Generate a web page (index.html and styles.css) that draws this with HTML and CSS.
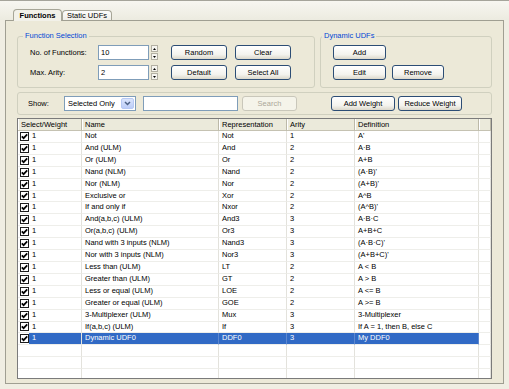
FILE: index.html
```html
<!DOCTYPE html>
<html lang="en">
<head>
    <meta charset="UTF-8">
    <title>Functions</title>
    <link rel="stylesheet" href="styles.css">
</head>
<body>
    <svg class="defs" width="0" height="0">
        <symbol id="tick" viewBox="0 0 7 7">
            <path d="M0.8 3.4 L2.6 5.2 L6.2 1.4" fill="none" stroke="#000" stroke-width="1.7"/>
        </symbol>
        <symbol id="chev" viewBox="0 0 7 5">
            <path d="M1 1 L3.5 3.5 L6 1" fill="none" stroke="#4d6185" stroke-width="1.5"/>
        </symbol>
    </svg>

    <div class="tabs">
        <div class="tab active">Functions</div>
        <div class="tab">Static UDFs</div>
    </div>

    <div class="panel">
        <div class="top-row">
            <fieldset class="group func-sel">
                <legend>Function Selection</legend>
                <div class="rows">
                    <div class="row">
                        <span class="lbl">No. of Functions:</span>
                        <span class="input num">10</span>
                        <span class="spin"><i><svg width="3" height="2"><path d="M0 2h3L1.5 0z"/></svg></i><i><svg width="3" height="2"><path d="M0 0h3L1.5 2z"/></svg></i></span>
                        <button class="btn b-random">Random</button>
                        <button class="btn b-clear">Clear</button>
                    </div>
                    <div class="row">
                        <span class="lbl">Max. Arity:</span>
                        <span class="input num">2</span>
                        <span class="spin"><i><svg width="3" height="2"><path d="M0 2h3L1.5 0z"/></svg></i><i><svg width="3" height="2"><path d="M0 0h3L1.5 2z"/></svg></i></span>
                        <button class="btn b-random">Default</button>
                        <button class="btn b-clear">Select All</button>
                    </div>
                </div>
            </fieldset>

            <fieldset class="group dyn">
                <legend>Dynamic UDFs</legend>
                <div class="rows">
                    <div class="row">
                        <button class="btn b-add">Add</button>
                    </div>
                    <div class="row">
                        <button class="btn b-add">Edit</button>
                        <button class="btn b-remove">Remove</button>
                    </div>
                </div>
            </fieldset>
        </div>

        <div class="filter">
            <span class="show-lbl">Show:</span>
            <div class="combo">
                <span class="combo-text">Selected Only</span>
                <span class="combo-btn"><svg width="7" height="5"><use href="#chev"/></svg></span>
            </div>
            <span class="input search-box"></span>
            <button class="btn b-search" disabled>Search</button>
            <button class="btn b-addw">Add Weight</button>
            <button class="btn b-redw">Reduce Weight</button>
        </div>

        <div class="grid-wrap">
            <table class="grid">
                <colgroup>
                    <col class="c-sel">
                    <col class="c-name">
                    <col class="c-rep">
                    <col class="c-ar">
                    <col class="c-def">
                    <col class="c-fill">
                </colgroup>
                <thead>
                    <tr>
                        <th>Select/Weight</th>
                        <th>Name</th>
                        <th>Representation</th>
                        <th>Arity</th>
                        <th>Definition</th>
                        <th></th>
                    </tr>
                </thead>
                <tbody>
                    <tr><td class="cw"><div class="cb"><span class="box"><svg width="7" height="7"><use href="#tick"/></svg></span><span class="w">1</span></div></td><td>Not</td><td>Not</td><td>1</td><td>A'</td><td class="fill"></td></tr>
                    <tr><td class="cw"><div class="cb"><span class="box"><svg width="7" height="7"><use href="#tick"/></svg></span><span class="w">1</span></div></td><td>And (ULM)</td><td>And</td><td>2</td><td>A·B</td><td class="fill"></td></tr>
                    <tr><td class="cw"><div class="cb"><span class="box"><svg width="7" height="7"><use href="#tick"/></svg></span><span class="w">1</span></div></td><td>Or (ULM)</td><td>Or</td><td>2</td><td>A+B</td><td class="fill"></td></tr>
                    <tr><td class="cw"><div class="cb"><span class="box"><svg width="7" height="7"><use href="#tick"/></svg></span><span class="w">1</span></div></td><td>Nand (NLM)</td><td>Nand</td><td>2</td><td>(A·B)'</td><td class="fill"></td></tr>
                    <tr><td class="cw"><div class="cb"><span class="box"><svg width="7" height="7"><use href="#tick"/></svg></span><span class="w">1</span></div></td><td>Nor (NLM)</td><td>Nor</td><td>2</td><td>(A+B)'</td><td class="fill"></td></tr>
                    <tr><td class="cw"><div class="cb"><span class="box"><svg width="7" height="7"><use href="#tick"/></svg></span><span class="w">1</span></div></td><td>Exclusive or</td><td>Xor</td><td>2</td><td>A^B</td><td class="fill"></td></tr>
                    <tr><td class="cw"><div class="cb"><span class="box"><svg width="7" height="7"><use href="#tick"/></svg></span><span class="w">1</span></div></td><td>If and only if</td><td>Nxor</td><td>2</td><td>(A^B)'</td><td class="fill"></td></tr>
                    <tr><td class="cw"><div class="cb"><span class="box"><svg width="7" height="7"><use href="#tick"/></svg></span><span class="w">1</span></div></td><td>And(a,b,c) (ULM)</td><td>And3</td><td>3</td><td>A·B·C</td><td class="fill"></td></tr>
                    <tr><td class="cw"><div class="cb"><span class="box"><svg width="7" height="7"><use href="#tick"/></svg></span><span class="w">1</span></div></td><td>Or(a,b,c) (ULM)</td><td>Or3</td><td>3</td><td>A+B+C</td><td class="fill"></td></tr>
                    <tr><td class="cw"><div class="cb"><span class="box"><svg width="7" height="7"><use href="#tick"/></svg></span><span class="w">1</span></div></td><td>Nand with 3 inputs (NLM)</td><td>Nand3</td><td>3</td><td>(A·B·C)'</td><td class="fill"></td></tr>
                    <tr><td class="cw"><div class="cb"><span class="box"><svg width="7" height="7"><use href="#tick"/></svg></span><span class="w">1</span></div></td><td>Nor with 3 inputs (NLM)</td><td>Nor3</td><td>3</td><td>(A+B+C)'</td><td class="fill"></td></tr>
                    <tr><td class="cw"><div class="cb"><span class="box"><svg width="7" height="7"><use href="#tick"/></svg></span><span class="w">1</span></div></td><td>Less than (ULM)</td><td>LT</td><td>2</td><td>A &lt; B</td><td class="fill"></td></tr>
                    <tr><td class="cw"><div class="cb"><span class="box"><svg width="7" height="7"><use href="#tick"/></svg></span><span class="w">1</span></div></td><td>Greater than (ULM)</td><td>GT</td><td>2</td><td>A &gt; B</td><td class="fill"></td></tr>
                    <tr><td class="cw"><div class="cb"><span class="box"><svg width="7" height="7"><use href="#tick"/></svg></span><span class="w">1</span></div></td><td>Less or equal (ULM)</td><td>LOE</td><td>2</td><td>A &lt;= B</td><td class="fill"></td></tr>
                    <tr><td class="cw"><div class="cb"><span class="box"><svg width="7" height="7"><use href="#tick"/></svg></span><span class="w">1</span></div></td><td>Greater or equal (ULM)</td><td>GOE</td><td>2</td><td>A &gt;= B</td><td class="fill"></td></tr>
                    <tr><td class="cw"><div class="cb"><span class="box"><svg width="7" height="7"><use href="#tick"/></svg></span><span class="w">1</span></div></td><td>3-Multiplexer (ULM)</td><td>Mux</td><td>3</td><td>3-Multiplexer</td><td class="fill"></td></tr>
                    <tr><td class="cw"><div class="cb"><span class="box"><svg width="7" height="7"><use href="#tick"/></svg></span><span class="w">1</span></div></td><td>If(a,b,c) (ULM)</td><td>If</td><td>3</td><td>If A = 1, then B, else C</td><td class="fill"></td></tr>
                    <tr class="sel"><td class="cw"><div class="cb"><span class="box"><svg width="7" height="7"><use href="#tick"/></svg></span><span class="w">1</span></div></td><td>Dynamic UDF0</td><td>DDF0</td><td>3</td><td>My DDF0</td><td class="fill"></td></tr>
                    <tr><td></td><td></td><td></td><td></td><td></td><td class="fill"></td></tr>
                    <tr><td></td><td></td><td></td><td></td><td></td><td class="fill"></td></tr>
                    <tr><td></td><td></td><td></td><td></td><td></td><td class="fill"></td></tr>
                    <tr><td></td><td></td><td></td><td></td><td></td><td class="fill"></td></tr>
                </tbody>
            </table>
        </div>
    </div>
</body>
</html>
```

FILE: styles.css
```css
* {
    margin: 0;
    padding: 0;
    box-sizing: border-box;
}
body {
    width: 509px;
    height: 389px;
    overflow: hidden;
    background: #f0eee3;
    font-family: 'Liberation Sans', Arial, sans-serif;
    font-size: 7.5px;
    color: #000;
}
.defs {
    position: absolute;
}

/* tab strip */
.tabs {
    height: 20px;
    display: flex;
    align-items: flex-end;
    padding-left: 13px;
    border-top: 1px solid #a5a49b;
    background: linear-gradient(#f7f6f1, #ecebe0);
}
.tab {
    width: 50px;
    height: 10px;
    line-height: 9px;
    text-align: center;
    border: 1px solid #a6a597;
    border-bottom: none;
    border-radius: 4px 4px 0 0;
    background: linear-gradient(#fdfdfc, #efeee7);
}
.tab.active {
    width: 49px;
    height: 12px;
    line-height: 11px;
    margin-bottom: -1px;
    font-weight: bold;
    background: #f2f1e9;
    position: relative;
    z-index: 1;
}

/* panel */
.panel {
    height: 364px;
    margin: 0 5px;
    border: 1px solid #a09f92;
    background: #ece9d8;
    padding: 10px 11px 4px;
    display: flex;
    flex-direction: column;
}
.top-row {
    display: flex;
    gap: 5px;
}
.group {
    border: 1px solid #d0d0bf;
    border-radius: 3px;
    padding: 4px 12px 7px;
    min-width: 0;
}
.group legend {
    color: #0046d5;
    padding: 0 2px;
    line-height: 10px;
}
.func-sel {
    width: 298px;
}
.func-sel legend {
    margin-left: -7px;
}
.dyn {
    width: 172px;
}
.dyn legend {
    margin-left: -11px;
}
.rows {
    display: flex;
    flex-direction: column;
    gap: 5px;
}
.row {
    display: flex;
    align-items: center;
    height: 15px;
}
.lbl {
    width: 68px;
}
.input {
    height: 15px;
    border: 1px solid #7f9db9;
    background: #fff;
    line-height: 13px;
    padding-left: 2px;
}
.num {
    width: 51px;
}
.spin {
    width: 7px;
    margin-left: 2px;
    display: flex;
    flex-direction: column;
    gap: 1px;
}
.spin i {
    height: 7px;
    border: 1px solid #b3b0a3;
    background: #f6f5f0;
    display: flex;
    align-items: center;
    justify-content: center;
}
.btn {
    height: 15px;
    border: 1px solid #2c4d75;
    border-radius: 3px;
    background: linear-gradient(#ffffff, #f4f3ee 65%, #dcd8cb);
    font: inherit;
    color: #000;
    line-height: 13px;
}
.b-random {
    width: 56px;
    margin-left: 13px;
}
.b-clear {
    width: 56px;
    margin-left: 8px;
}
.b-add {
    width: 53px;
}
.b-remove {
    width: 52px;
    margin-left: 6px;
}

/* filter bar */
.filter {
    margin-top: 4px;
    height: 23px;
    border: 1px solid #d0d0bf;
    border-radius: 3px;
    padding: 3px 10px;
    display: flex;
    align-items: center;
}
.show-lbl {
    width: 36px;
}
.combo {
    width: 72px;
    height: 15px;
    border: 1px solid #7f9db9;
    background: #fff;
    display: flex;
    align-items: center;
    padding: 1px;
}
.combo-text {
    flex: 1;
    padding-left: 2px;
}
.combo-btn {
    width: 13px;
    height: 11px;
    border: 1px solid #b7c9f4;
    border-radius: 2px;
    background: linear-gradient(#dbe5fc, #bccdf8);
    display: flex;
    align-items: center;
    justify-content: center;
}
.search-box {
    width: 95px;
    margin-left: 7px;
}
.b-search {
    width: 55px;
    margin-left: 4px;
    border-color: #c9c7ba;
    background: #f5f4ea;
    color: #aca899;
}
.b-addw {
    width: 64px;
    margin-left: 34px;
}
.b-redw {
    width: 64px;
    margin-left: 3px;
}

/* list */
.grid-wrap {
    margin-top: 3px;
    height: 261px;
    border: 1px solid #7b7b7b;
    background: #fff;
    overflow: hidden;
}
.grid {
    width: 473px;
    table-layout: fixed;
    border-spacing: 0;
}
.c-sel { width: 64px; }
.c-name { width: 137px; }
.c-rep { width: 68px; }
.c-ar { width: 68px; }
.c-def { width: 124px; }
.c-fill { width: 12px; }
.grid th {
    height: 12px;
    padding: 0 3px;
    font-weight: normal;
    text-align: left;
    line-height: 10px;
    background: #ebeadb;
    border-right: 1px solid #bcb9a8;
    border-bottom: 1px solid #c5c2b2;
    box-shadow: inset 1px 0 #fff;
    white-space: nowrap;
}
.grid td {
    height: 11.9px;
    padding: 0 3px;
    line-height: 10.9px;
    border-right: 1px solid #e3e2dc;
    border-bottom: 1px solid #eeeeea;
    white-space: nowrap;
    overflow: hidden;
}
.grid td.cw {
    padding: 0;
}
.cb {
    display: flex;
    align-items: center;
    height: 10.9px;
}
.box {
    width: 9px;
    height: 9px;
    margin-left: 2px;
    border: 1px solid #1d1d1d;
    background: #fff;
    display: flex;
    align-items: center;
    justify-content: center;
}
.w {
    flex: 1;
    height: 10.9px;
    padding-left: 3px;
}
.sel td:not(.cw):not(.fill),
.sel .w {
    background: #316ac5;
    color: #fff;
}
.sel td:not(.cw):not(.fill) {
    border-right-color: #5d88cf;
}
```
